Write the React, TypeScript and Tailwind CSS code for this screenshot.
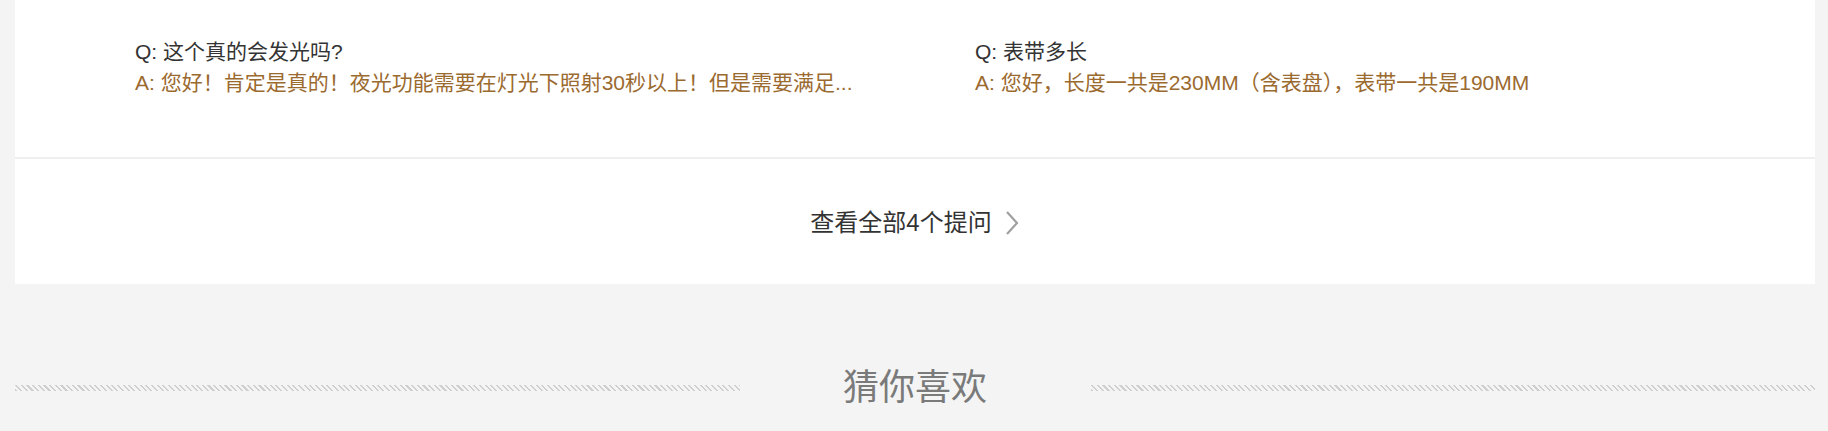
import React from "react";

const font = { fontFamily: '"Liberation Sans", "Noto Sans CJK SC", sans-serif' };

function QA({ q, a }: { q: string; a: string }) {
  return (
    <div className="w-[840px] shrink-0 pr-[120px]">
      <div className="text-[21px] leading-[31px] text-[#333333] whitespace-nowrap">{q}</div>
      <div className="text-[21px] leading-[31px] text-[#9b6a2f] whitespace-nowrap overflow-hidden">{a}</div>
    </div>
  );
}

export default function App() {
  return (
    <div className="w-[1828px] min-h-[431px] bg-[#f4f4f4] overflow-hidden" style={font}>
      <div className="ml-[15px] w-[1800px] bg-white">
        <div className="h-[157px] pl-[120px] pt-[36px] flex">
          <QA q="Q: 这个真的会发光吗?" a="A: 您好！肯定是真的！夜光功能需要在灯光下照射30秒以上！但是需要满足..." />
          <QA q="Q: 表带多长" a="A: 您好，长度一共是230MM（含表盘），表带一共是190MM" />
        </div>
        <div className="h-[127px] pt-[3px] border-t-2 border-[#efefef] flex items-center justify-center">
          <span className="text-[24px] text-[#333333]">查看全部4个提问</span>
          <svg className="ml-[12px]" width="16" height="26" viewBox="0 0 16 26" fill="none">
            <path d="M3 2 L13 13 L3 24" stroke="#a0a0a0" strokeWidth="2.2" />
          </svg>
        </div>
      </div>
      <div className="ml-[15px] w-[1800px] pt-[81px] flex items-center">
        <div className="flex-1 h-[6px] bg-[repeating-linear-gradient(45deg,#cfcfcf_0px,#cfcfcf_1.5px,transparent_1.5px,transparent_4px)]" />
        <div className="w-[351px] text-center text-[36px] leading-[46px] text-[#7a7a7a]">猜你喜欢</div>
        <div className="flex-1 h-[6px] bg-[repeating-linear-gradient(45deg,#cfcfcf_0px,#cfcfcf_1.5px,transparent_1.5px,transparent_4px)]" />
      </div>
    </div>
  );
}
